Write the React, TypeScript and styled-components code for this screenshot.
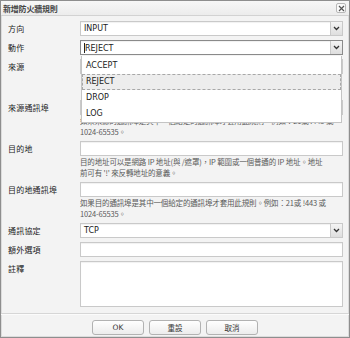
import React from "react";
import styled, { createGlobalStyle } from "styled-components";

const Global = createGlobalStyle`
  html, body { margin: 0; padding: 0; background: #ffffff; }
  body { font-family: "DejaVu Sans", "Noto Sans CJK TC", sans-serif; }
  * { box-sizing: border-box; }
`;

const Dialog = styled.div`
  position: relative;
  width: 350px;
  height: 338px;
  display: flex;
  flex-direction: column;
  background: #f3f3f3;
  border: 1px solid #8e8e8e;
  box-shadow: inset 0 0 0 1px #dcdcdc;
`;

const TitleBar = styled.div`
  height: 15px;
  flex: none;
  display: flex;
  align-items: center;
  justify-content: space-between;
  padding: 0 3px 0 2px;
  background: linear-gradient(#f7f7f7, #ececec);
  border-bottom: 1px solid #d2d2d2;
`;

const Title = styled.span`
  font-family: "Noto Sans CJK TC", sans-serif;
  font-size: 8px;
  font-weight: 700;
  color: #444;
  letter-spacing: -0.2px;
`;

const CloseBtn = styled.div`
  width: 10px;
  height: 10px;
  border: 1px solid #b8b8b8;
  border-radius: 2px;
  background: #fafafa;
  display: flex;
  align-items: center;
  justify-content: center;
`;

const Form = styled.div`
  flex: 1;
  display: flex;
  flex-direction: column;
  gap: 4px;
  padding: 5px 6px 0 7px;
`;

const Row = styled.div<{ $top?: boolean }>`
  display: grid;
  grid-template-columns: 72px 1fr;
  position: relative;
  z-index: ${(p) => (p.$top ? 5 : "auto")};
`;

const Label = styled.div`
  font-family: "Noto Sans CJK TC", sans-serif;
  font-size: 8px;
  color: #222;
  height: 15px;
  line-height: 15px;
  white-space: nowrap;
  letter-spacing: 0.2px;
`;

const Field = styled.div`
  display: flex;
  flex-direction: column;
  position: relative;
`;

const Box = styled.div<{ $focus?: boolean; $h?: number }>`
  height: ${(p) => p.$h ?? 15}px;
  background: #fff;
  border: 1px solid ${(p) => (p.$focus ? "#8a8a8a" : "#c9c9c9")};
  box-shadow: inset 0 1px 1px rgba(0, 0, 0, 0.06);
  display: flex;
  align-items: center;
  position: relative;
`;

const Value = styled.span`
  font-family: "DejaVu Sans", sans-serif;
  font-size: 8px;
  color: #222;
  padding-left: 3px;
  flex: 1;
`;

const Caret = styled.span`
  display: inline-block;
  width: 1px;
  height: 10px;
  background: #222;
  vertical-align: middle;
`;

const Arrow = styled.div`
  width: 12px;
  align-self: stretch;
  border-left: 1px solid #c9c9c9;
  background: linear-gradient(#f4f4f4, #dedede);
  display: flex;
  align-items: center;
  justify-content: center;
`;

const Help = styled.div<{ $covered?: boolean }>`
  font-family: "Noto Sans CJK TC", sans-serif;
  font-size: 7.5px;
  line-height: 11px;
  height: 22px;
  color: #5a5a5a;
  white-space: nowrap;
  overflow: hidden;
  letter-spacing: -0.15px;
  visibility: ${(p) => (p.$covered ? "hidden" : "visible")};
`;

const Menu = styled.div`
  position: absolute;
  top: 15px;
  left: 0;
  right: 0;
  z-index: 5;
  background: #fff;
  border: 1px solid #c4c4c4;
  border-top: none;
  padding-top: 2px;
  display: flex;
  flex-direction: column;
`;

const MenuItem = styled.div<{ $active?: boolean }>`
  height: 16px;
  line-height: 14px;
  font-family: "DejaVu Sans", sans-serif;
  font-size: 8px;
  color: #222;
  padding-left: 3px;
  border: 1px ${(p) => (p.$active ? "dashed #a8a8a8" : "solid transparent")};
  background: ${(p) => (p.$active ? "#ededed" : "transparent")};
`;

const Footer = styled.div`
  flex: none;
  height: 26px;
  border-top: 1px solid #d6d6d6;
  display: flex;
  justify-content: center;
  align-items: flex-start;
  gap: 5px;
  padding-top: 6px;
  margin-top: 6px;
  box-shadow: inset 0 1px 0 #fbfbfb;
`;

const Button = styled.button`
  width: 52px;
  height: 15px;
  padding: 0;
  border: 1px solid #b2b2b2;
  border-radius: 3px;
  background: linear-gradient(#ffffff, #ececec);
  font-family: "DejaVu Sans", "Noto Sans CJK TC", sans-serif;
  font-size: 7.5px;
  color: #333;
`;

const Chevron = () => (
  <svg width="7" height="5" viewBox="0 0 7 5">
    <path d="M1 1 L3.5 3.5 L6 1" fill="none" stroke="#333" strokeWidth="1.3" />
  </svg>
);

const Cross = () => (
  <svg width="7" height="7" viewBox="0 0 7 7">
    <path d="M1 1 L6 6 M6 1 L1 6" stroke="#555" strokeWidth="1.2" />
  </svg>
);

const Select = ({ value, focus, children }: { value: string; focus?: boolean; children?: React.ReactNode }) => (
  <Box $focus={focus}>
    <Value>
      {focus && <Caret />}
      {value}
    </Value>
    <Arrow>
      <Chevron />
    </Arrow>
    {children}
  </Box>
);

export default function App() {
  return (
    <>
      <Global />
      <Dialog>
        <TitleBar>
          <Title>新增防火牆規則</Title>
          <CloseBtn>
            <Cross />
          </CloseBtn>
        </TitleBar>
        <Form>
          <Row>
            <Label>方向</Label>
            <Field>
              <Select value="INPUT" />
            </Field>
          </Row>
          <Row $top>
            <Label>動作</Label>
            <Field>
              <Select value="REJECT" focus>
                <Menu>
                  <MenuItem>ACCEPT</MenuItem>
                  <MenuItem $active>REJECT</MenuItem>
                  <MenuItem>DROP</MenuItem>
                  <MenuItem>LOG</MenuItem>
                </Menu>
              </Select>
            </Field>
          </Row>
          <Row>
            <Label>來源</Label>
            <Field>
              <Box />
              <Help $covered>
                來源地址可以是網路 IP 地址(與 /遮罩)，IP 範圍或一個普通的 IP 地址。地址
                <br />
                前可有 '!' 來反轉地址的意義。
              </Help>
            </Field>
          </Row>
          <Row>
            <Label>來源通訊埠</Label>
            <Field>
              <Box />
              <Help>
                如果來源的通訊埠是其中一個給定的通訊埠才套用此規則。例如：21或 !443 或
                <br />
                1024-65535。
              </Help>
            </Field>
          </Row>
          <Row>
            <Label>目的地</Label>
            <Field>
              <Box />
              <Help>
                目的地址可以是網路 IP 地址(與 /遮罩)，IP 範圍或一個普通的 IP 地址。地址
                <br />
                前可有 '!' 來反轉地址的意義。
              </Help>
            </Field>
          </Row>
          <Row>
            <Label>目的地通訊埠</Label>
            <Field>
              <Box />
              <Help>
                如果目的通訊埠是其中一個給定的通訊埠才套用此規則。例如：21或 !443 或
                <br />
                1024-65535。
              </Help>
            </Field>
          </Row>
          <Row>
            <Label>通訊協定</Label>
            <Field>
              <Select value="TCP" />
            </Field>
          </Row>
          <Row>
            <Label>額外選項</Label>
            <Field>
              <Box />
            </Field>
          </Row>
          <Row>
            <Label>註釋</Label>
            <Field>
              <Box $h={46} />
            </Field>
          </Row>
        </Form>
        <Footer>
          <Button>OK</Button>
          <Button>重設</Button>
          <Button>取消</Button>
        </Footer>
      </Dialog>
    </>
  );
}
